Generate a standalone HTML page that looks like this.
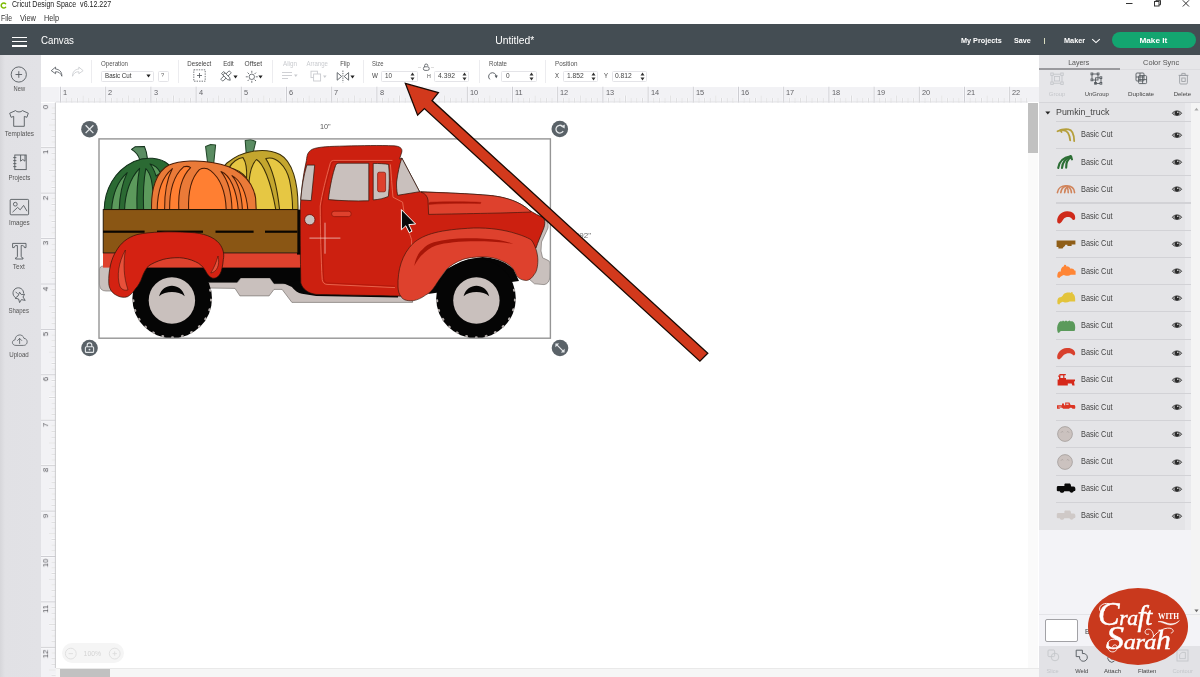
<!DOCTYPE html>
<html lang="en"><head><meta charset="utf-8"><title>Cricut Design Space</title>
<style>
html,body{margin:0;padding:0}
body{width:1200px;height:677px;position:relative;overflow:hidden;background:#fff;font-family:"Liberation Sans",sans-serif;color:#333}
.a{position:absolute}
.t{position:absolute;white-space:nowrap;line-height:1;font-size:7px;color:#444;will-change:transform}
.c{transform:translateX(-50%)}
svg{position:absolute;overflow:visible}
.inp{position:absolute;height:9px;border:1px solid #dcdce0;border-radius:2px;background:#fff;top:71px}
.div{position:absolute;width:1px;background:#e3e3e6;top:60px;height:23px}
.sp{position:absolute;top:72.5px;width:4px;height:8px}
.row{position:absolute;left:1056px;width:126px;height:1px;background:#cfcfd3}
.lt{position:absolute;left:1081px;font-size:7.5px;color:#444;line-height:1;white-space:nowrap}
</style></head><body>
<!-- chrome -->
<svg style="left:-0.2px;top:1.6px" width="7" height="7" viewBox="0 0 7 7"><path d="M5.6 1.7A2.55 2.55 0 1 0 5.6 5.3" fill="none" stroke="#7cba00" stroke-width="1.5" stroke-linecap="round"/></svg>
<div class="t" style="top:0.07px;font-size:8.3px;color:#222;left:11.70px;"><span style="display:inline-block;transform:scaleX(0.849);transform-origin:0 50%">Cricut Design Space&nbsp; v6.12.227</span></div>
<div class="t" style="top:13.82px;font-size:8.6px;color:#333;left:1.00px;"><span style="display:inline-block;transform:scaleX(0.794);transform-origin:0 50%">File</span></div>
<div class="t" style="top:13.82px;font-size:8.6px;color:#333;left:20.00px;"><span style="display:inline-block;transform:scaleX(0.866);transform-origin:0 50%">View</span></div>
<div class="t" style="top:13.82px;font-size:8.6px;color:#333;left:43.70px;"><span style="display:inline-block;transform:scaleX(0.848);transform-origin:0 50%">Help</span></div>
<svg style="left:1120px;top:0" width="80" height="10" viewBox="0 0 80 10"><g fill="none" stroke="#333" stroke-width="1"><path d="M6 3.5h6.5"/><rect x="34.5" y="1.5" width="4.5" height="4.5"/><path d="M36 1.5V0.3h4.5V4.8H39"/><path d="M62.8 0.3l6.2 6.2M69 .3l-6.2 6.2"/></g></svg>
<div class="a" style="left:0;top:24.2px;width:1200px;height:31px;background:#444d53"></div>
<div class="a" style="left:11.5px;top:36.6px;width:15px;height:1.5px;background:#fff"></div>
<div class="a" style="left:11.5px;top:40.8px;width:15px;height:1.5px;background:#fff"></div>
<div class="a" style="left:11.5px;top:45.0px;width:15px;height:1.5px;background:#fff"></div>
<div class="t" style="top:35.27px;font-size:11.5px;color:#fff;left:40.80px;"><span style="display:inline-block;transform:scaleX(0.846);transform-origin:0 50%">Canvas</span></div>
<div class="t" style="top:35.27px;font-size:11.5px;color:#fff;left:492.77px;"><span style="display:inline-block;transform:scaleX(0.897);transform-origin:50% 50%">Untitled*</span></div>
<div class="t" style="top:36.61px;font-size:7.9px;color:#fff;font-weight:bold;left:960.60px;"><span style="display:inline-block;transform:scaleX(0.918);transform-origin:0 50%">My Projects</span></div>
<div class="t" style="top:36.61px;font-size:7.9px;color:#fff;font-weight:bold;left:1013.70px;"><span style="display:inline-block;transform:scaleX(0.916);transform-origin:0 50%">Save</span></div>
<div class="a" style="left:1043.5px;top:37.5px;width:1px;height:6px;background:#d8dcc0"></div>
<div class="t" style="top:36.61px;font-size:7.9px;color:#fff;font-weight:bold;left:1063.50px;"><span style="display:inline-block;transform:scaleX(0.928);transform-origin:0 50%">Maker</span></div>
<svg style="left:1091px;top:38px" width="10" height="6" viewBox="0 0 10 6"><path d="M1.2 1.2L5 4.6L8.8 1.2" fill="none" stroke="#fff" stroke-width="1.1"/></svg>
<div class="a" style="left:1112px;top:32px;width:84px;height:16px;border-radius:8px;background:#13a570"></div>
<div class="t" style="top:36.61px;font-size:7.9px;color:#fff;font-weight:bold;left:1140.11px;"><span style="display:inline-block;transform:scaleX(1.045);transform-origin:50% 50%">Make It</span></div>
<div class="a" style="left:0;top:55.2px;width:41px;height:622px;background:linear-gradient(to right,#d6d6da 0,#e1e1e5 5px,#e2e2e6 100%)"></div>
<div class="a" style="left:41px;top:55.2px;width:997.5px;height:32px;background:#fff"></div>
<!-- sidebar -->
<svg style="left:9px;top:65px" width="20" height="20" viewBox="0 0 20 20"><circle cx="9.8" cy="9.5" r="7.6" fill="none" stroke="#565b60" stroke-width="0.9"/><path d="M9.8 6.2v6.6M6.5 9.5h6.6" stroke="#565b60" stroke-width="0.9" fill="none"/></svg>
<div class="t" style="top:86.47px;font-size:6.3px;color:#555;left:12.70px;"><span style="display:inline-block;transform:scaleX(0.912);transform-origin:50% 50%">New</span></div>
<svg style="left:8px;top:109px" width="22" height="19" viewBox="0 0 22 19"><path d="M7.6 1.6C8.6 3.4 13.4 3.4 14.4 1.6L20.3 4.2L18.9 8.3L16.3 7.4V17.3H5.7V7.4L3.1 8.3L1.7 4.2Z" fill="none" stroke="#565b60" stroke-width="0.9" stroke-linejoin="round"/></svg>
<div class="t" style="top:130.77px;font-size:6.3px;color:#555;left:4.64px;"><span style="display:inline-block;transform:scaleX(1.020);transform-origin:50% 50%">Templates</span></div>
<svg style="left:12px;top:153px" width="16" height="18" viewBox="0 0 16 18"><g fill="none" stroke="#565b60" stroke-width="0.9"><rect x="2.8" y="2" width="11.4" height="14.6"/><path d="M8.6 2v6.2l2.2-1.7l2.2 1.7V2"/><path d="M1.2 4.6h3.2M1.2 7.6h3.2M1.2 10.6h3.2M1.2 13.6h3.2"/></g></svg>
<div class="t" style="top:174.97px;font-size:6.3px;color:#555;left:7.62px;"><span style="display:inline-block;transform:scaleX(0.967);transform-origin:50% 50%">Projects</span></div>
<svg style="left:9px;top:198px" width="21" height="18" viewBox="0 0 21 18"><g fill="none" stroke="#565b60" stroke-width="0.9" stroke-linejoin="round"><rect x="1.2" y="1.4" width="18.4" height="15.4" rx="0.8"/><circle cx="6.3" cy="6.2" r="1.9"/><path d="M3.5 14.2L8.6 9.4L11.2 11.8L14.6 7.4L18 13.2"/></g></svg>
<div class="t" style="top:220.07px;font-size:6.3px;color:#555;left:8.67px;">Images</div>
<svg style="left:11px;top:242px" width="17" height="18" viewBox="0 0 17 18"><path d="M1.6 1.4H15V5.6H13.4C13.2 4 12.6 3.5 10.2 3.5V14.2C10.2 15.4 10.8 15.8 12 15.8V17H4.6V15.8C5.8 15.8 6.4 15.4 6.4 14.2V3.5C4 3.5 3.4 4 3.2 5.6H1.6Z" fill="none" stroke="#565b60" stroke-width="0.9" stroke-linejoin="round"/></svg>
<div class="t" style="top:263.87px;font-size:6.3px;color:#555;left:13.22px;"><span style="display:inline-block;transform:scaleX(1.039);transform-origin:50% 50%">Text</span></div>
<svg style="left:9.8px;top:287px" width="17" height="17" viewBox="0 0 17 17"><g fill="none" stroke="#565b60" stroke-width="0.9" stroke-linejoin="round"><path d="M5.2 10.4A5.3 5.3 0 1 1 13.6 6.4"/><path d="M9.6 5.2L11.3 7.6L14.6 7.2L13 10L15.2 13.4L11.4 12.6L9.6 15.6L8.6 12L5 11.2L8 9Z"/><path d="M5.6 4.8l2 2"/></g></svg>
<div class="t" style="top:307.67px;font-size:6.3px;color:#555;left:8.32px;"><span style="display:inline-block;transform:scaleX(0.959);transform-origin:50% 50%">Shapes</span></div>
<svg style="left:10.5px;top:333px" width="17.6" height="14" viewBox="0 0 20 16"><g fill="none" stroke="#565b60" stroke-width="0.9" stroke-linejoin="round" stroke-linecap="round"><path d="M5.2 14.2C0.6 14.2 0.2 8.4 4.6 7.8C4.6 1.2 13.6 0.2 14.8 6.2C19.6 6.2 19.8 14.2 14.6 14.2Z"/><path d="M9.8 12V6.4M7.4 8.6L9.8 6.2L12.2 8.6"/></g></svg>
<div class="t" style="top:351.67px;font-size:6.3px;color:#555;left:9.02px;"><span style="display:inline-block;transform:scaleX(0.977);transform-origin:50% 50%">Upload</span></div>
<!-- toolbar -->
<svg style="left:49.5px;top:65.8px" width="14.4" height="11.7" viewBox="0 0 16 13"><path d="M6.2 1.2L1.4 5.2L6.2 8.6V6.4C9.6 6.2 12 8 13.2 11.4C13.4 6.6 10.4 3.6 6.2 3.4Z" fill="none" stroke="#50565b" stroke-width="0.9" stroke-linejoin="round"/></svg>
<svg style="left:69.5px;top:65.8px" width="14.4" height="11.7" viewBox="0 0 16 13"><path d="M9.8 1.2L14.6 5.2L9.8 8.6V6.4C6.4 6.2 4 8 2.8 11.4C2.6 6.6 5.6 3.6 9.8 3.4Z" fill="none" stroke="#c9cbcf" stroke-width="0.9" stroke-linejoin="round"/></svg>
<div class="a" style="left:91px;top:60px;width:1px;height:23px;background:#ececef"></div>
<div class="t" style="top:61.47px;font-size:6.3px;color:#555;left:101.00px;"><span style="display:inline-block;transform:scaleX(0.976);transform-origin:0 50%">Operation</span></div>
<div class="a" style="left:101px;top:70.8px;width:51px;height:9.6px;border:0.8px solid #e4e4e8;border-radius:1.5px;background:#fff"></div>
<div class="t" style="top:73.37px;font-size:6.3px;color:#333;left:104.50px;"><span style="display:inline-block;transform:scaleX(0.983);transform-origin:0 50%">Basic Cut</span></div>
<svg style="left:145.5px;top:74px" width="5" height="4" viewBox="0 0 5 4"><path d="M0.4 0.5H4.6L2.5 3.5Z" fill="#222"/></svg>
<div class="a" style="left:157.5px;top:70.8px;width:9.4px;height:9.6px;border:0.8px solid #e4e4e8;border-radius:1.5px;background:#fff"></div>
<div class="t" style="top:73.29px;font-size:5.8px;color:#666;left:161.19px;">?</div>
<div class="a" style="left:177.5px;top:60px;width:1px;height:23px;background:#ececef"></div>
<div class="t" style="top:61.47px;font-size:6.3px;color:#444;left:186.74px;"><span style="display:inline-block;transform:scaleX(0.979);transform-origin:50% 50%">Deselect</span></div>
<svg style="left:192.5px;top:69.4px" width="13" height="13" viewBox="0 0 13 13"><rect x="0.8" y="0.8" width="11.4" height="11.4" fill="none" stroke="#50565b" stroke-width="0.8" stroke-dasharray="1.4 1.1"/><path d="M6.5 4v5M4 6.5h5" stroke="#50565b" stroke-width="0.8"/></svg>
<div class="t" style="top:61.47px;font-size:6.3px;color:#444;left:222.87px;"><span style="display:inline-block;transform:scaleX(0.967);transform-origin:50% 50%">Edit</span></div>
<svg style="left:219.5px;top:70px" width="12" height="12" viewBox="0 0 12 12"><g fill="#fff" stroke="#50565b" stroke-width="0.8" stroke-linejoin="round"><rect x="4.5" y="0" width="3" height="12" rx="0.6" transform="rotate(45 6 6)"/><path d="M4.5 1.2H7.5V9.6L6 12L4.5 9.6Z" transform="rotate(-45 6 6)"/><path d="M4.5 3H7.5" transform="rotate(-45 6 6)"/></g></svg>
<svg style="left:233px;top:74.5px" width="5" height="4" viewBox="0 0 5 4"><path d="M0.4 0.5H4.6L2.5 3.5Z" fill="#222"/></svg>
<div class="t" style="top:61.47px;font-size:6.3px;color:#444;left:245.35px;"><span style="display:inline-block;transform:scaleX(1.048);transform-origin:50% 50%">Offset</span></div>
<svg style="left:245px;top:69.5px" width="14" height="14" viewBox="0 0 14 14"><g fill="none" stroke="#50565b" stroke-width="0.8"><circle cx="6.8" cy="6.8" r="2.7"/><path d="M6.8 0.8v2M6.8 10.8v2M0.8 6.8h2M10.8 6.8h2M2.6 2.6l1.4 1.4M9.6 9.6l1.4 1.4M2.6 11l1.4-1.4M9.6 4l1.4-1.4"/></g></svg>
<svg style="left:257.5px;top:74.5px" width="5" height="4" viewBox="0 0 5 4"><path d="M0.4 0.5H4.6L2.5 3.5Z" fill="#222"/></svg>
<div class="a" style="left:271.5px;top:60px;width:1px;height:23px;background:#ececef"></div>
<div class="t" style="top:61.47px;font-size:6.3px;color:#c9cbcf;left:282.70px;">Align</div>
<svg style="left:281px;top:71px" width="18" height="11" viewBox="0 0 18 11"><g stroke="#c9cbcf" stroke-width="0.9" fill="none"><path d="M1 1.5h10M1 4.5h10M1 7.5h6"/></g><path d="M13 3.5H16.6L14.8 6Z" fill="#c9cbcf"/></svg>
<div class="t" style="top:61.47px;font-size:6.3px;color:#c9cbcf;left:305.79px;"><span style="display:inline-block;transform:scaleX(0.959);transform-origin:50% 50%">Arrange</span></div>
<svg style="left:310px;top:69.5px" width="18" height="13" viewBox="0 0 18 13"><g stroke="#c9cbcf" stroke-width="0.9" fill="#fff"><rect x="1" y="1.2" width="6.4" height="6.4"/><rect x="3.6" y="4" width="7" height="7"/></g><path d="M13 5.5H16.6L14.8 8Z" fill="#c9cbcf"/></svg>
<div class="t" style="top:61.47px;font-size:6.3px;color:#444;left:339.92px;"><span style="display:inline-block;transform:scaleX(0.936);transform-origin:50% 50%">Flip</span></div>
<svg style="left:336px;top:69.5px" width="14" height="13" viewBox="0 0 14 13"><g fill="none" stroke="#50565b" stroke-width="0.85" stroke-linejoin="round"><path d="M1.2 2.6L5.6 6.4L1.2 10.2Z"/><path d="M12.6 2.6L8.2 6.4L12.6 10.2Z"/><path d="M6.9 0.6V12.4" stroke-dasharray="1.3 1"/></g></svg>
<svg style="left:349.5px;top:74.5px" width="5" height="4" viewBox="0 0 5 4"><path d="M0.4 0.5H4.6L2.5 3.5Z" fill="#222"/></svg>
<div class="a" style="left:362.5px;top:60px;width:1px;height:23px;background:#ececef"></div>
<div class="t" style="top:61.47px;font-size:6.3px;color:#555;left:372.00px;"><span style="display:inline-block;transform:scaleX(0.938);transform-origin:0 50%">Size</span></div>
<div class="t" style="top:73.28px;font-size:6.4px;color:#444;left:372.30px;"><span style="display:inline-block;transform:scaleX(0.977);transform-origin:0 50%">W</span></div>
<div class="a" style="left:381.2px;top:70.8px;width:34.60000000000002px;height:9.4px;border:0.8px solid #e4e4e8;border-radius:1.5px;background:#fff"></div>
<div class="t" style="top:73.20px;font-size:6.5px;color:#444;left:385.00px;"><span style="display:inline-block;transform:scaleX(0.968);transform-origin:0 50%">10</span></div>
<svg style="left:410.1px;top:71.5px" width="5" height="9" viewBox="0 0 5 9"><path d="M2.5 0.6L4.5 3.4H0.5ZM2.5 8.4L4.5 5.6H0.5Z" fill="#333"/></svg>
<svg style="left:421.5px;top:62.5px" width="9" height="8" viewBox="0 0 9 8"><g fill="none" stroke="#50565b" stroke-width="0.8"><path d="M2.6 4V2.6A1.6 1.6 0 0 1 5.8 2.6V3.2"/><rect x="1.4" y="3.8" width="5.8" height="3.6" rx="1.6"/></g></svg>
<div class="a" style="left:418px;top:67px;width:3px;height:1px;background:#ddd"></div><div class="a" style="left:431px;top:67px;width:3px;height:1px;background:#ddd"></div>
<div class="t" style="top:73.87px;font-size:5px;color:#555;left:426.70px;"><span style="display:inline-block;transform:scaleX(1.052);transform-origin:0 50%">H</span></div>
<div class="a" style="left:434px;top:70.8px;width:33.30000000000001px;height:9.4px;border:0.8px solid #e4e4e8;border-radius:1.5px;background:#fff"></div>
<div class="t" style="top:73.20px;font-size:6.5px;color:#444;left:438.00px;"><span style="display:inline-block;transform:scaleX(1.045);transform-origin:0 50%">4.392</span></div>
<svg style="left:462.1px;top:71.5px" width="5" height="9" viewBox="0 0 5 9"><path d="M2.5 0.6L4.5 3.4H0.5ZM2.5 8.4L4.5 5.6H0.5Z" fill="#333"/></svg>
<div class="a" style="left:478.7px;top:60px;width:1px;height:23px;background:#ececef"></div>
<div class="t" style="top:61.47px;font-size:6.3px;color:#555;left:488.50px;"><span style="display:inline-block;transform:scaleX(0.970);transform-origin:0 50%">Rotate</span></div>
<svg style="left:487px;top:71px" width="11" height="11" viewBox="0 0 11 11"><path d="M2.9 8.4A3.8 3.8 0 1 1 9.2 5.2" fill="none" stroke="#50565b" stroke-width="0.9"/><path d="M7.6 4.6L10.8 4.6L9.3 7.2Z" fill="#50565b"/></svg>
<div class="a" style="left:500.6px;top:70.8px;width:34.0px;height:9.4px;border:0.8px solid #e4e4e8;border-radius:1.5px;background:#fff"></div>
<div class="t" style="top:73.20px;font-size:6.5px;color:#444;left:505.60px;">0</div>
<svg style="left:529.0px;top:71.5px" width="5" height="9" viewBox="0 0 5 9"><path d="M2.5 0.6L4.5 3.4H0.5ZM2.5 8.4L4.5 5.6H0.5Z" fill="#333"/></svg>
<div class="a" style="left:545px;top:60px;width:1px;height:23px;background:#ececef"></div>
<div class="t" style="top:61.47px;font-size:6.3px;color:#555;left:555.20px;">Position</div>
<div class="t" style="top:73.28px;font-size:6.4px;color:#444;left:555.20px;"><span style="display:inline-block;transform:scaleX(0.937);transform-origin:0 50%">X</span></div>
<div class="a" style="left:562.7px;top:70.8px;width:33.299999999999955px;height:9.4px;border:0.8px solid #e4e4e8;border-radius:1.5px;background:#fff"></div>
<div class="t" style="top:73.20px;font-size:6.5px;color:#444;left:566.70px;"><span style="display:inline-block;transform:scaleX(1.033);transform-origin:0 50%">1.852</span></div>
<svg style="left:590.8px;top:71.5px" width="5" height="9" viewBox="0 0 5 9"><path d="M2.5 0.6L4.5 3.4H0.5ZM2.5 8.4L4.5 5.6H0.5Z" fill="#333"/></svg>
<div class="t" style="top:73.28px;font-size:6.4px;color:#444;left:604.20px;"><span style="display:inline-block;transform:scaleX(0.937);transform-origin:0 50%">Y</span></div>
<div class="a" style="left:611.7px;top:70.8px;width:33.799999999999955px;height:9.4px;border:0.8px solid #e4e4e8;border-radius:1.5px;background:#fff"></div>
<div class="t" style="top:73.20px;font-size:6.5px;color:#444;left:615.20px;"><span style="display:inline-block;transform:scaleX(1.033);transform-origin:0 50%">0.812</span></div>
<svg style="left:640.2px;top:71.5px" width="5" height="9" viewBox="0 0 5 9"><path d="M2.5 0.6L4.5 3.4H0.5ZM2.5 8.4L4.5 5.6H0.5Z" fill="#333"/></svg>
<!-- rulers -->
<div class="a" style="left:41px;top:86.8px;width:997.5px;height:15.7px;background:#f2f2f5"></div>
<div class="a" style="left:41px;top:102.5px;width:14.7px;height:575px;background:#f2f2f5"></div>
<svg style="left:0;top:0" width="1200" height="677" viewBox="0 0 1200 677"><g fill="none"><path d="M66.2 98V102.5M71.8 98V102.5M77.5 98V102.5M88.8 98V102.5M94.4 98V102.5M100.0 98V102.5M111.4 98V102.5M117.0 98V102.5M122.7 98V102.5M134.0 98V102.5M139.6 98V102.5M145.3 98V102.5M156.6 98V102.5M162.2 98V102.5M167.9 98V102.5M179.2 98V102.5M184.8 98V102.5M190.5 98V102.5M201.8 98V102.5M207.4 98V102.5M213.1 98V102.5M224.4 98V102.5M230.0 98V102.5M235.7 98V102.5M247.0 98V102.5M252.6 98V102.5M258.2 98V102.5M269.6 98V102.5M275.2 98V102.5M280.9 98V102.5M292.2 98V102.5M297.8 98V102.5M303.5 98V102.5M314.8 98V102.5M320.4 98V102.5M326.1 98V102.5M337.4 98V102.5M343.0 98V102.5M348.7 98V102.5M360.0 98V102.5M365.6 98V102.5M371.3 98V102.5M382.6 98V102.5M388.2 98V102.5M393.9 98V102.5M405.2 98V102.5M410.8 98V102.5M416.5 98V102.5M427.8 98V102.5M433.4 98V102.5M439.1 98V102.5M450.4 98V102.5M456.0 98V102.5M461.7 98V102.5M473.0 98V102.5M478.6 98V102.5M484.3 98V102.5M495.6 98V102.5M501.2 98V102.5M506.9 98V102.5M518.1 98V102.5M523.8 98V102.5M529.4 98V102.5M540.8 98V102.5M546.4 98V102.5M552.0 98V102.5M563.4 98V102.5M569.0 98V102.5M574.6 98V102.5M586.0 98V102.5M591.6 98V102.5M597.2 98V102.5M608.5 98V102.5M614.2 98V102.5M619.9 98V102.5M631.1 98V102.5M636.8 98V102.5M642.5 98V102.5M653.8 98V102.5M659.4 98V102.5M665.0 98V102.5M676.4 98V102.5M682.0 98V102.5M687.6 98V102.5M699.0 98V102.5M704.6 98V102.5M710.2 98V102.5M721.5 98V102.5M727.2 98V102.5M732.9 98V102.5M744.1 98V102.5M749.8 98V102.5M755.5 98V102.5M766.8 98V102.5M772.4 98V102.5M778.0 98V102.5M789.4 98V102.5M795.0 98V102.5M800.6 98V102.5M812.0 98V102.5M817.6 98V102.5M823.2 98V102.5M834.5 98V102.5M840.2 98V102.5M845.9 98V102.5M857.1 98V102.5M862.8 98V102.5M868.5 98V102.5M879.8 98V102.5M885.4 98V102.5M891.0 98V102.5M902.4 98V102.5M908.0 98V102.5M913.6 98V102.5M925.0 98V102.5M930.6 98V102.5M936.2 98V102.5M947.6 98V102.5M953.2 98V102.5M958.9 98V102.5M970.1 98V102.5M975.8 98V102.5M981.5 98V102.5M992.8 98V102.5M998.4 98V102.5M1004.1 98V102.5M1015.4 98V102.5M1021.0 98V102.5M1026.7 98V102.5M51.5 108.0H55.7M51.5 113.7H55.7M51.5 119.3H55.7M51.5 130.7H55.7M51.5 136.4H55.7M51.5 142.0H55.7M51.5 153.4H55.7M51.5 159.1H55.7M51.5 164.8H55.7M51.5 176.1H55.7M51.5 181.8H55.7M51.5 187.5H55.7M51.5 198.8H55.7M51.5 204.5H55.7M51.5 210.2H55.7M51.5 221.5H55.7M51.5 227.2H55.7M51.5 232.9H55.7M51.5 244.2H55.7M51.5 249.9H55.7M51.5 255.6H55.7M51.5 266.9H55.7M51.5 272.6H55.7M51.5 278.3H55.7M51.5 289.7H55.7M51.5 295.3H55.7M51.5 301.0H55.7M51.5 312.4H55.7M51.5 318.0H55.7M51.5 323.7H55.7M51.5 335.1H55.7M51.5 340.8H55.7M51.5 346.4H55.7M51.5 357.8H55.7M51.5 363.5H55.7M51.5 369.1H55.7M51.5 380.5H55.7M51.5 386.2H55.7M51.5 391.9H55.7M51.5 403.2H55.7M51.5 408.9H55.7M51.5 414.6H55.7M51.5 425.9H55.7M51.5 431.6H55.7M51.5 437.3H55.7M51.5 448.6H55.7M51.5 454.3H55.7M51.5 460.0H55.7M51.5 471.3H55.7M51.5 477.0H55.7M51.5 482.7H55.7M51.5 494.0H55.7M51.5 499.7H55.7M51.5 505.4H55.7M51.5 516.8H55.7M51.5 522.4H55.7M51.5 528.1H55.7M51.5 539.5H55.7M51.5 545.1H55.7M51.5 550.8H55.7M51.5 562.2H55.7M51.5 567.9H55.7M51.5 573.5H55.7M51.5 584.9H55.7M51.5 590.6H55.7M51.5 596.2H55.7M51.5 607.6H55.7M51.5 613.3H55.7M51.5 619.0H55.7M51.5 630.3H55.7M51.5 636.0H55.7M51.5 641.7H55.7M51.5 653.0H55.7M51.5 658.7H55.7M51.5 664.4H55.7M51.5 675.7H55.7M83.1 95.5V102.5M128.3 95.5V102.5M173.5 95.5V102.5M218.7 95.5V102.5M263.9 95.5V102.5M309.1 95.5V102.5M354.3 95.5V102.5M399.5 95.5V102.5M444.7 95.5V102.5M489.9 95.5V102.5M535.1 95.5V102.5M580.3 95.5V102.5M625.5 95.5V102.5M670.7 95.5V102.5M715.9 95.5V102.5M761.1 95.5V102.5M806.3 95.5V102.5M851.5 95.5V102.5M896.7 95.5V102.5M941.9 95.5V102.5M987.1 95.5V102.5M49 125.0H55.7M49 170.4H55.7M49 215.9H55.7M49 261.3H55.7M49 306.7H55.7M49 352.1H55.7M49 397.5H55.7M49 443.0H55.7M49 488.4H55.7M49 533.8H55.7M49 579.2H55.7M49 624.6H55.7M49 670.0H55.7" stroke="#fff" stroke-width="1.8"/><path d="M66.2 98V102.5M71.8 98V102.5M77.5 98V102.5M88.8 98V102.5M94.4 98V102.5M100.0 98V102.5M111.4 98V102.5M117.0 98V102.5M122.7 98V102.5M134.0 98V102.5M139.6 98V102.5M145.3 98V102.5M156.6 98V102.5M162.2 98V102.5M167.9 98V102.5M179.2 98V102.5M184.8 98V102.5M190.5 98V102.5M201.8 98V102.5M207.4 98V102.5M213.1 98V102.5M224.4 98V102.5M230.0 98V102.5M235.7 98V102.5M247.0 98V102.5M252.6 98V102.5M258.2 98V102.5M269.6 98V102.5M275.2 98V102.5M280.9 98V102.5M292.2 98V102.5M297.8 98V102.5M303.5 98V102.5M314.8 98V102.5M320.4 98V102.5M326.1 98V102.5M337.4 98V102.5M343.0 98V102.5M348.7 98V102.5M360.0 98V102.5M365.6 98V102.5M371.3 98V102.5M382.6 98V102.5M388.2 98V102.5M393.9 98V102.5M405.2 98V102.5M410.8 98V102.5M416.5 98V102.5M427.8 98V102.5M433.4 98V102.5M439.1 98V102.5M450.4 98V102.5M456.0 98V102.5M461.7 98V102.5M473.0 98V102.5M478.6 98V102.5M484.3 98V102.5M495.6 98V102.5M501.2 98V102.5M506.9 98V102.5M518.1 98V102.5M523.8 98V102.5M529.4 98V102.5M540.8 98V102.5M546.4 98V102.5M552.0 98V102.5M563.4 98V102.5M569.0 98V102.5M574.6 98V102.5M586.0 98V102.5M591.6 98V102.5M597.2 98V102.5M608.5 98V102.5M614.2 98V102.5M619.9 98V102.5M631.1 98V102.5M636.8 98V102.5M642.5 98V102.5M653.8 98V102.5M659.4 98V102.5M665.0 98V102.5M676.4 98V102.5M682.0 98V102.5M687.6 98V102.5M699.0 98V102.5M704.6 98V102.5M710.2 98V102.5M721.5 98V102.5M727.2 98V102.5M732.9 98V102.5M744.1 98V102.5M749.8 98V102.5M755.5 98V102.5M766.8 98V102.5M772.4 98V102.5M778.0 98V102.5M789.4 98V102.5M795.0 98V102.5M800.6 98V102.5M812.0 98V102.5M817.6 98V102.5M823.2 98V102.5M834.5 98V102.5M840.2 98V102.5M845.9 98V102.5M857.1 98V102.5M862.8 98V102.5M868.5 98V102.5M879.8 98V102.5M885.4 98V102.5M891.0 98V102.5M902.4 98V102.5M908.0 98V102.5M913.6 98V102.5M925.0 98V102.5M930.6 98V102.5M936.2 98V102.5M947.6 98V102.5M953.2 98V102.5M958.9 98V102.5M970.1 98V102.5M975.8 98V102.5M981.5 98V102.5M992.8 98V102.5M998.4 98V102.5M1004.1 98V102.5M1015.4 98V102.5M1021.0 98V102.5M1026.7 98V102.5M51.5 108.0H55.7M51.5 113.7H55.7M51.5 119.3H55.7M51.5 130.7H55.7M51.5 136.4H55.7M51.5 142.0H55.7M51.5 153.4H55.7M51.5 159.1H55.7M51.5 164.8H55.7M51.5 176.1H55.7M51.5 181.8H55.7M51.5 187.5H55.7M51.5 198.8H55.7M51.5 204.5H55.7M51.5 210.2H55.7M51.5 221.5H55.7M51.5 227.2H55.7M51.5 232.9H55.7M51.5 244.2H55.7M51.5 249.9H55.7M51.5 255.6H55.7M51.5 266.9H55.7M51.5 272.6H55.7M51.5 278.3H55.7M51.5 289.7H55.7M51.5 295.3H55.7M51.5 301.0H55.7M51.5 312.4H55.7M51.5 318.0H55.7M51.5 323.7H55.7M51.5 335.1H55.7M51.5 340.8H55.7M51.5 346.4H55.7M51.5 357.8H55.7M51.5 363.5H55.7M51.5 369.1H55.7M51.5 380.5H55.7M51.5 386.2H55.7M51.5 391.9H55.7M51.5 403.2H55.7M51.5 408.9H55.7M51.5 414.6H55.7M51.5 425.9H55.7M51.5 431.6H55.7M51.5 437.3H55.7M51.5 448.6H55.7M51.5 454.3H55.7M51.5 460.0H55.7M51.5 471.3H55.7M51.5 477.0H55.7M51.5 482.7H55.7M51.5 494.0H55.7M51.5 499.7H55.7M51.5 505.4H55.7M51.5 516.8H55.7M51.5 522.4H55.7M51.5 528.1H55.7M51.5 539.5H55.7M51.5 545.1H55.7M51.5 550.8H55.7M51.5 562.2H55.7M51.5 567.9H55.7M51.5 573.5H55.7M51.5 584.9H55.7M51.5 590.6H55.7M51.5 596.2H55.7M51.5 607.6H55.7M51.5 613.3H55.7M51.5 619.0H55.7M51.5 630.3H55.7M51.5 636.0H55.7M51.5 641.7H55.7M51.5 653.0H55.7M51.5 658.7H55.7M51.5 664.4H55.7M51.5 675.7H55.7M83.1 95.5V102.5M128.3 95.5V102.5M173.5 95.5V102.5M218.7 95.5V102.5M263.9 95.5V102.5M309.1 95.5V102.5M354.3 95.5V102.5M399.5 95.5V102.5M444.7 95.5V102.5M489.9 95.5V102.5M535.1 95.5V102.5M580.3 95.5V102.5M625.5 95.5V102.5M670.7 95.5V102.5M715.9 95.5V102.5M761.1 95.5V102.5M806.3 95.5V102.5M851.5 95.5V102.5M896.7 95.5V102.5M941.9 95.5V102.5M987.1 95.5V102.5M49 125.0H55.7M49 170.4H55.7M49 215.9H55.7M49 261.3H55.7M49 306.7H55.7M49 352.1H55.7M49 397.5H55.7M49 443.0H55.7M49 488.4H55.7M49 533.8H55.7M49 579.2H55.7M49 624.6H55.7M49 670.0H55.7" stroke="#c4c4c8" stroke-width="0.6"/><path d="M60.5 86.8V102.5M105.7 86.8V102.5M150.9 86.8V102.5M196.1 86.8V102.5M241.3 86.8V102.5M286.5 86.8V102.5M331.7 86.8V102.5M376.9 86.8V102.5M422.1 86.8V102.5M467.3 86.8V102.5M512.5 86.8V102.5M557.7 86.8V102.5M602.9 86.8V102.5M648.1 86.8V102.5M693.3 86.8V102.5M738.5 86.8V102.5M783.7 86.8V102.5M828.9 86.8V102.5M874.1 86.8V102.5M919.3 86.8V102.5M964.5 86.8V102.5M1009.7 86.8V102.5M41 147.7H55.7M41 193.1H55.7M41 238.6H55.7M41 284.0H55.7M41 329.4H55.7M41 374.8H55.7M41 420.2H55.7M41 465.7H55.7M41 511.1H55.7M41 556.5H55.7M41 601.9H55.7M41 647.3H55.7" stroke="#fbfbfd" stroke-width="2.2"/><path d="M60.5 86.8V102.5M105.7 86.8V102.5M150.9 86.8V102.5M196.1 86.8V102.5M241.3 86.8V102.5M286.5 86.8V102.5M331.7 86.8V102.5M376.9 86.8V102.5M422.1 86.8V102.5M467.3 86.8V102.5M512.5 86.8V102.5M557.7 86.8V102.5M602.9 86.8V102.5M648.1 86.8V102.5M693.3 86.8V102.5M738.5 86.8V102.5M783.7 86.8V102.5M828.9 86.8V102.5M874.1 86.8V102.5M919.3 86.8V102.5M964.5 86.8V102.5M1009.7 86.8V102.5M41 147.7H55.7M41 193.1H55.7M41 238.6H55.7M41 284.0H55.7M41 329.4H55.7M41 374.8H55.7M41 420.2H55.7M41 465.7H55.7M41 511.1H55.7M41 556.5H55.7M41 601.9H55.7M41 647.3H55.7" stroke="#c2c2c6" stroke-width="0.8"/><path d="M55.7 102H1027.8" stroke="#dadade" stroke-width="0.8"/><path d="M55.4 102.5V668" stroke="#c6c6ca" stroke-width="0.9"/></g></svg>
<div class="t" style="top:89.34px;font-size:7.4px;color:#636367;left:63.20px;">1</div>
<div class="t" style="top:89.34px;font-size:7.4px;color:#636367;left:108.40px;">2</div>
<div class="t" style="top:89.34px;font-size:7.4px;color:#636367;left:153.60px;">3</div>
<div class="t" style="top:89.34px;font-size:7.4px;color:#636367;left:198.80px;">4</div>
<div class="t" style="top:89.34px;font-size:7.4px;color:#636367;left:244.00px;">5</div>
<div class="t" style="top:89.34px;font-size:7.4px;color:#636367;left:289.20px;">6</div>
<div class="t" style="top:89.34px;font-size:7.4px;color:#636367;left:334.40px;">7</div>
<div class="t" style="top:89.34px;font-size:7.4px;color:#636367;left:379.60px;">8</div>
<div class="t" style="top:89.34px;font-size:7.4px;color:#636367;left:424.80px;">9</div>
<div class="t" style="top:89.34px;font-size:7.4px;color:#636367;left:470.00px;">10</div>
<div class="t" style="top:89.34px;font-size:7.4px;color:#636367;left:515.20px;">11</div>
<div class="t" style="top:89.34px;font-size:7.4px;color:#636367;left:560.40px;">12</div>
<div class="t" style="top:89.34px;font-size:7.4px;color:#636367;left:605.60px;">13</div>
<div class="t" style="top:89.34px;font-size:7.4px;color:#636367;left:650.80px;">14</div>
<div class="t" style="top:89.34px;font-size:7.4px;color:#636367;left:696.00px;">15</div>
<div class="t" style="top:89.34px;font-size:7.4px;color:#636367;left:741.20px;">16</div>
<div class="t" style="top:89.34px;font-size:7.4px;color:#636367;left:786.40px;">17</div>
<div class="t" style="top:89.34px;font-size:7.4px;color:#636367;left:831.60px;">18</div>
<div class="t" style="top:89.34px;font-size:7.4px;color:#636367;left:876.80px;">19</div>
<div class="t" style="top:89.34px;font-size:7.4px;color:#636367;left:922.00px;">20</div>
<div class="t" style="top:89.34px;font-size:7.4px;color:#636367;left:967.20px;">21</div>
<div class="t" style="top:89.34px;font-size:7.4px;color:#636367;left:1012.40px;">22</div>
<div class="t" style="left:45.9px;top:106.8px;font-size:7.8px;color:#55555a;transform:translate(-50%,-50%) rotate(-90deg)">0</div>
<div class="t" style="left:45.9px;top:152.2px;font-size:7.8px;color:#55555a;transform:translate(-50%,-50%) rotate(-90deg)">1</div>
<div class="t" style="left:45.9px;top:197.6px;font-size:7.8px;color:#55555a;transform:translate(-50%,-50%) rotate(-90deg)">2</div>
<div class="t" style="left:45.9px;top:243.1px;font-size:7.8px;color:#55555a;transform:translate(-50%,-50%) rotate(-90deg)">3</div>
<div class="t" style="left:45.9px;top:288.5px;font-size:7.8px;color:#55555a;transform:translate(-50%,-50%) rotate(-90deg)">4</div>
<div class="t" style="left:45.9px;top:333.9px;font-size:7.8px;color:#55555a;transform:translate(-50%,-50%) rotate(-90deg)">5</div>
<div class="t" style="left:45.9px;top:379.3px;font-size:7.8px;color:#55555a;transform:translate(-50%,-50%) rotate(-90deg)">6</div>
<div class="t" style="left:45.9px;top:424.7px;font-size:7.8px;color:#55555a;transform:translate(-50%,-50%) rotate(-90deg)">7</div>
<div class="t" style="left:45.9px;top:470.2px;font-size:7.8px;color:#55555a;transform:translate(-50%,-50%) rotate(-90deg)">8</div>
<div class="t" style="left:45.9px;top:515.6px;font-size:7.8px;color:#55555a;transform:translate(-50%,-50%) rotate(-90deg)">9</div>
<div class="t" style="left:45.9px;top:563.1px;font-size:7.8px;color:#55555a;transform:translate(-50%,-50%) rotate(-90deg)">10</div>
<div class="t" style="left:45.9px;top:608.5px;font-size:7.8px;color:#55555a;transform:translate(-50%,-50%) rotate(-90deg)">11</div>
<div class="t" style="left:45.9px;top:653.9px;font-size:7.8px;color:#55555a;transform:translate(-50%,-50%) rotate(-90deg)">12</div>
<div class="a" style="left:41px;top:86.8px;width:14.7px;height:15.7px;background:#f2f2f5"></div>
<!-- canvas -->
<div class="a" style="left:1027.8px;top:102.5px;width:10.7px;height:566px;background:#fafafa"></div>
<div class="a" style="left:1027.8px;top:102.5px;width:10.4px;height:50.5px;background:#c1c1c1"></div>
<div class="a" style="left:55.7px;top:667.8px;width:983px;height:9.5px;background:#f6f6f6;border-top:1px solid #e9e9e9"></div>
<div class="a" style="left:60px;top:668.6px;width:50px;height:8.4px;background:#c1c1c1"></div>
<div class="a" style="left:61.5px;top:642.5px;width:62px;height:20px;border-radius:10px;background:#f5f5f5"></div>
<svg style="left:61.5px;top:642.5px" width="62" height="20" viewBox="0 0 62 20"><g fill="none" stroke="#dedede" stroke-width="0.9"><circle cx="8.8" cy="10.6" r="5.4"/><circle cx="52.7" cy="10.6" r="5.4"/><path d="M6.6 10.6h4.4M50.5 10.6h4.4M52.7 8.4v4.4"/></g></svg>
<div class="t" style="top:650.02px;font-size:7.3px;color:#d4d4d4;left:83.26px;"><span style="display:inline-block;transform:scaleX(0.937);transform-origin:50% 50%">100%</span></div>
<!-- truck -->
<svg style="left:0;top:0" width="1200" height="677" viewBox="0 0 1200 677">
<g fill="#c9c0bd" stroke="#6a6462" stroke-width="0.6"><path d="M116 266H103.5Q99.4 266 99.4 270V284Q99.6 291 106 291H120Z"/><path d="M206 282L238 282L240.7 278L269.9 278L274 283.7L300 283.7L300 290L412 297L412.6 302.4L291.9 302.4L282.1 289.4L274 289.4L269.1 295.9L239.9 295.9L235 288.4L206 288Z"/><path d="M541 216Q549.5 221 548 228L541.5 242L541 251L542.6 257.8L548.5 260.6Q550.8 262 550.3 266L550 277Q549 284 544 284.6L534.5 283.8L529 279L527 238Z"/></g>
<g fill="#050505"><path d="M114 266H301V283.8H274L269.9 278H240.7L237 282.6H114Z"/><path d="M283 283L291.9 287Q296 292.5 302 293.8L316.2 295.9L398 297.4L398 280L300 280Z"/><path d="M428 294L446.8 269.1Q463 259 482.5 256.9Q502 258 513.4 269.1L519 281Z"/><circle cx="172.2" cy="298.4" r="39.8"/><circle cx="476" cy="298.4" r="39.8"/></g>
<ellipse cx="210.2" cy="290.3" rx="1.1" ry="1.5" fill="#b5aeac" transform="rotate(-12.0 210.2 290.3)"/><ellipse cx="211.1" cy="300.1" rx="1.1" ry="1.5" fill="#b5aeac" transform="rotate(2.5 211.1 300.1)"/><ellipse cx="209.4" cy="309.8" rx="1.1" ry="1.5" fill="#b5aeac" transform="rotate(17.0 209.4 309.8)"/><ellipse cx="205.4" cy="318.7" rx="1.1" ry="1.5" fill="#b5aeac" transform="rotate(31.5 205.4 318.7)"/><ellipse cx="199.2" cy="326.4" rx="1.1" ry="1.5" fill="#b5aeac" transform="rotate(46.0 199.2 326.4)"/><ellipse cx="191.4" cy="332.3" rx="1.1" ry="1.5" fill="#b5aeac" transform="rotate(60.5 191.4 332.3)"/><ellipse cx="182.3" cy="336.0" rx="1.1" ry="1.5" fill="#b5aeac" transform="rotate(75.0 182.3 336.0)"/><ellipse cx="172.5" cy="337.3" rx="1.1" ry="1.5" fill="#b5aeac" transform="rotate(89.5 172.5 337.3)"/><ellipse cx="162.8" cy="336.1" rx="1.1" ry="1.5" fill="#b5aeac" transform="rotate(104.0 162.8 336.1)"/><ellipse cx="153.6" cy="332.6" rx="1.1" ry="1.5" fill="#b5aeac" transform="rotate(118.5 153.6 332.6)"/><ellipse cx="145.7" cy="326.8" rx="1.1" ry="1.5" fill="#b5aeac" transform="rotate(133.0 145.7 326.8)"/><ellipse cx="139.4" cy="319.3" rx="1.1" ry="1.5" fill="#b5aeac" transform="rotate(147.5 139.4 319.3)"/><ellipse cx="135.2" cy="310.4" rx="1.1" ry="1.5" fill="#b5aeac" transform="rotate(162.0 135.2 310.4)"/><ellipse cx="133.4" cy="300.8" rx="1.1" ry="1.5" fill="#b5aeac" transform="rotate(176.5 133.4 300.8)"/><ellipse cx="514.0" cy="290.3" rx="1.1" ry="1.5" fill="#b5aeac" transform="rotate(-12.0 514.0 290.3)"/><ellipse cx="514.9" cy="300.1" rx="1.1" ry="1.5" fill="#b5aeac" transform="rotate(2.5 514.9 300.1)"/><ellipse cx="513.2" cy="309.8" rx="1.1" ry="1.5" fill="#b5aeac" transform="rotate(17.0 513.2 309.8)"/><ellipse cx="509.2" cy="318.7" rx="1.1" ry="1.5" fill="#b5aeac" transform="rotate(31.5 509.2 318.7)"/><ellipse cx="503.0" cy="326.4" rx="1.1" ry="1.5" fill="#b5aeac" transform="rotate(46.0 503.0 326.4)"/><ellipse cx="495.2" cy="332.3" rx="1.1" ry="1.5" fill="#b5aeac" transform="rotate(60.5 495.2 332.3)"/><ellipse cx="486.1" cy="336.0" rx="1.1" ry="1.5" fill="#b5aeac" transform="rotate(75.0 486.1 336.0)"/><ellipse cx="476.3" cy="337.3" rx="1.1" ry="1.5" fill="#b5aeac" transform="rotate(89.5 476.3 337.3)"/><ellipse cx="466.6" cy="336.1" rx="1.1" ry="1.5" fill="#b5aeac" transform="rotate(104.0 466.6 336.1)"/><ellipse cx="457.4" cy="332.6" rx="1.1" ry="1.5" fill="#b5aeac" transform="rotate(118.5 457.4 332.6)"/><ellipse cx="449.5" cy="326.8" rx="1.1" ry="1.5" fill="#b5aeac" transform="rotate(133.0 449.5 326.8)"/><ellipse cx="443.2" cy="319.3" rx="1.1" ry="1.5" fill="#b5aeac" transform="rotate(147.5 443.2 319.3)"/><ellipse cx="439.0" cy="310.4" rx="1.1" ry="1.5" fill="#b5aeac" transform="rotate(162.0 439.0 310.4)"/><ellipse cx="437.2" cy="300.8" rx="1.1" ry="1.5" fill="#b5aeac" transform="rotate(176.5 437.2 300.8)"/>
<circle cx="171.9" cy="300.5" r="23.2" fill="#c9c0bd"/><path d="M159.1 296.2C162.9 282.4 180.9 282.4 184.70000000000002 296.2C178.4 290.6 165.4 290.6 159.1 296.2Z" fill="#050505"/><circle cx="476.4" cy="300.5" r="23.2" fill="#c9c0bd"/><path d="M463.59999999999997 296.2C467.4 282.4 485.4 282.4 489.2 296.2C482.9 290.6 469.9 290.6 463.59999999999997 296.2Z" fill="#050505"/>
<g stroke="#3a2e08" stroke-width="1.05" stroke-linejoin="round"><path d="M246.2 153.5L245.2 140.6L250.5 139.6L255.8 141.4L252.9 153.5Z" fill="#5a8c62" stroke="#24482a"/><path d="M217 209.6C215 190 216 173 227 163C235 156.5 245 152.5 252 151.5C262 149.5 272 150.5 280 154.5C292 161 298.5 182 298 209.6Z" fill="#c4a62e"/><path d="M229 168C232 162 238 158 243 157.6C246 162 247 170 246.6 178C242 172 236 169 229 168Z" fill="#e6c743"/><path d="M250.2 209.6C247.5 190 248 168 256.5 159.5C263 163 270.5 180 275.8 209.6Z" fill="#e6c743"/><path d="M279.6 209.6C277 186 272 168 265.8 158.6C276 155.5 286 166 289.5 180C291.5 190 292.6 200 292.6 209.6Z" fill="#e6c743"/></g>
<g stroke="#12301a" stroke-width="1.05" stroke-linejoin="round"><path d="M139.6 159.4C138 154 135 151.5 131.5 149.4L135 146.8L144.4 146.4C146 150 147 154 147.4 158.4Z" fill="#5a8c62"/><path d="M104.2 209.6C104.6 190 114 171 134 161.5C146 156.5 160 157 168.5 164.5L170 209.6Z" fill="#2b6a33"/><path d="M111.6 209.6C112.5 195 118 181 127.2 172.6C121.8 184 119.6 197 119.2 209.6Z" fill="#5c9a5c"/><path d="M124.6 209.6C125 194 130 178 139.6 168.4C137 182 136.6 196 137 209.6Z" fill="#5c9a5c"/><path d="M143.6 209.6C143 194 143.6 180 145.8 168.6C150.5 173 153.4 181 153.6 209.6Z" fill="#5c9a5c"/><path d="M150 164C154 165 158.5 168.6 160.5 173L156 176C154.6 171 152.6 167 150 164Z" fill="#5c9a5c"/></g>
<g stroke="#4a1c06" stroke-width="1.05" stroke-linejoin="round"><path d="M207.6 162.8L205.6 146.6L210.6 144.4L215.6 145L213.8 162.8Z" fill="#5a8c62" stroke="#24482a"/><path d="M151.6 209.6C150.8 190 156 171.5 169 165C180 160.4 200 160 212 162.6C236 166 252.5 178 255.6 198L256.2 209.6Z" fill="#ea7a38"/><path d="M157.2 209.6C157.4 192 162 177 172.4 168.6C166.4 180 164.4 195 164.6 209.6Z" fill="#ff7f32"/><path d="M169.6 209.6C169.4 192 173 176 183.6 166.8C186.6 166 189 166.4 190.6 167.6C181 177 178 193 178.8 209.6Z" fill="#ff7f32"/><path d="M188.6 209.6C188 192 191 178 199.4 169.6C203 167.6 207 168 210.6 170.6C220 178 225.6 192 226.2 209.6Z" fill="#ff7f32"/><path d="M232 209.6C231.6 194 228 180 221 171.6C230 175 236.6 190 238.2 209.6Z" fill="#ff7f32"/><path d="M242.4 209.6C241.6 195 238.4 183 232 175.6C241 180 246.6 194 247.8 209.6Z" fill="#ff7f32"/></g>
<rect x="103" y="253" width="198" height="14.6" fill="#de412d"/><rect x="297" y="209.6" width="4" height="45" fill="#050505"/><rect x="103.2" y="209.6" width="194.6" height="43.3" fill="#8a5614" stroke="#1c1004" stroke-width="0.9"/><rect x="103" y="230.6" width="41.599999999999994" height="2.2" fill="#0a0602"/><rect x="157" y="230.6" width="46" height="2.2" fill="#0a0602"/><rect x="215.5" y="230.6" width="38.099999999999994" height="2.2" fill="#0a0602"/><rect x="265" y="230.6" width="32.5" height="2.2" fill="#0a0602"/>
<g stroke="#2a1208" stroke-width="0.7" stroke-linejoin="round"><path d="M300.8 283C300.4 260 300 230 300.2 209.6C300.6 195 303 175 306.4 160.6C307 155 307.6 152 312 149.4C318 146.6 330 146.4 345 146C362 145.6 380 145.2 394 145.8C399.5 146.2 402.6 148 401.8 152L399.6 159L401.8 158L419.6 191.7C440 192.6 470 193.6 491.4 195.6C507 197.4 520 202 528.5 209.6C534 213.6 540 216 542.8 217.4C546 220 545 226 542.6 231C540.6 236 538 242 536 248L525 246L500 244L470 244L440 254L425 278L408 296L398 296C380 295.6 340 295 316.2 294.4C308 293.4 302.6 289 300.8 283Z" fill="#cc2010"/><path d="M306.8 165.1L314.7 165.1L311.2 200.6L300.8 199.9C301.6 188 303.6 176 306.8 165.1Z" fill="#c9c0bd"/><path d="M339 163.2H368.8V200.8C355 201.2 341 200.8 328.4 199.6C330 186 332.6 174 335.6 165.4C336.2 163.8 337.4 163.2 339 163.2Z" fill="#c9c0bd"/><path d="M373.2 163.4C379 163.4 385 163.8 388.6 164.4C389.6 174 389.6 186 388.4 196.4C384 198.4 378.6 199.6 373.2 199.9Z" fill="#c9c0bd"/><path d="M401.8 158L419.6 191.7L397.6 195.3C396.6 190 396.4 186 396.6 182C397.6 174 399.4 165 401.8 158Z" fill="#c9c0bd"/><rect x="377.6" y="172.2" width="8" height="19.6" rx="1.6" fill="#de412d" stroke="#8a1408"/><circle cx="309.8" cy="219.7" r="5.2" fill="#c9c0bd" stroke="#7a1208" stroke-width="0.9"/></g>
<g fill="none" stroke="#ea6a52" stroke-width="0.9" stroke-linejoin="round"><path d="M392.4 160.4H333.6C331.4 160.6 330.6 161.6 330.2 163.4C326 178 322 194 320.2 206C320.4 230 321 260 322.2 279.6C322.8 283 324.4 284.2 327 284.4L395 287.6"/><path d="M390.4 164.4C391.4 176 392 188 393 197.2L402.6 202.2C404 214 407 228 411.6 239.6V262"/></g><g fill="none" stroke="#a81608" stroke-width="0.7"><path d="M391.6 161.6H334.6C332.8 161.8 332 162.6 331.6 164C327.4 178.6 323.4 194 321.6 206C321.8 230 322.4 259 323.6 278.6C324 281.6 325.4 282.8 327.6 283L395 286.2"/></g><rect x="331.6" y="211.2" width="19.6" height="5.4" rx="2.6" fill="#de412d" stroke="#8a1408" stroke-width="0.7"/>
<g stroke="#2a1208" stroke-width="0.6" stroke-linejoin="round"><path d="M421 192C440 192.6 470 193.6 491.4 195.6C507 197.4 520 202 528.5 209.6L531 212C510 213 470 213.6 428.6 214.4L428 200C427.4 196 425 193.4 421 192Z" fill="#de412d"/><path d="M428.6 203.4L430 202.2C450 201.6 470 201.6 481 202.4L480.4 203.6C465 203.2 448 203.2 428.6 204.4Z" fill="#a81608" stroke="#a81608" stroke-width="0.5"/><path d="M398 287C397.4 270 402 254 413.4 243.1C424 234 440 229.6 473.6 228C490 227.6 505 230 516 233.6C524 236 529 238.4 531.3 239.9C536 246 538.4 256 537.8 262.6C537.4 269 536 272.6 534.5 274C532 278 529.6 280.2 526.4 280.5C522 280.4 518.6 278.6 516.6 275.6C514 268 508.6 263.4 502 261C496 258 489 256.8 482.5 256.9C474 257 468 257.8 463 259.4C456 262 450.6 265.4 446.8 269.1C442 275 438.6 280.6 435.4 285.4C432 290.6 429 293.4 425.6 295.1C421 298.4 417 300.2 412.6 300.8C406 301 402.4 299.4 401.3 296.8C399 294.4 398.2 291 398 287Z" fill="#de412d"/></g><path d="M414.3 265.9C415.6 258 418.4 253 422.4 249.6C425.6 246 429 243.8 433.8 242.3C444 239.4 456 238.4 466.3 238.3C478 238.2 489 238.8 498.8 239.9C504 240.8 509 242.2 513.4 243.9C504 242.4 494 241.4 480 241.2C462 241 446 242.4 436 245.4C427 248.6 419.4 256 414.3 265.9Z" fill="#a81608"/>
<g stroke="#2a1208" stroke-width="0.7" stroke-linejoin="round"><path d="M108.8 283.7C108.2 270 111.6 258 116.1 251.2C120.6 243 127.5 237.4 137 234.6C150 231.6 170 231.4 190 232.4C203 233 213.6 236.6 219.4 243.6C223.6 249 224.4 255 223.3 259.4C222.8 266 221.6 271 220 274C217.6 277.6 215 278.8 212 278C209 276.6 207 274 205.5 270.7C202.6 266 199.4 263.4 195.7 261.8C190 259.2 185 258 179.5 257.7C173 257.6 168 258.2 163.2 259.4C157 261.2 152 263.6 148.6 265.9C145.6 269 143.6 273 142.1 277.2C140.4 282 138.4 285.6 135.6 288.6C133 292.6 130.6 295 127.5 296.7C123.6 298 119.6 297.2 116.1 295.1C111.6 292.6 109.2 288.4 108.8 283.7Z" fill="#d42212"/><path d="M125.4 250C118.6 262 116.6 276 119.8 286C121.2 289.4 124.6 291 128 289.8C123.8 278 123 264 125.4 250Z" fill="#e8503a" stroke-width="0.5"/><path d="M218 256C216.4 262 214 268 210.8 273C216.6 272 220.2 265.6 218 256Z" fill="#e8503a" stroke-width="0.5"/></g>
<path d="M309.4 238.1H340.4M325 222.7V253.7" stroke="#f3d6d0" stroke-width="0.8" fill="none" opacity=".9"/>
</svg>
<!-- panel -->
<div class="a" style="left:1038.5px;top:55.2px;width:161.5px;height:621.8px;background:#f3f3f7"></div>
<div class="a" style="left:1038.5px;top:55.2px;width:161.5px;height:14.8px;background:#e6e6e9"></div>
<div class="a" style="left:1038.5px;top:68.4px;width:81.5px;height:1.5px;background:#9a9a9e"></div>
<div class="a" style="left:1120px;top:69.2px;width:80px;height:0.8px;background:#dcdce0"></div>
<div class="t" style="top:58.70px;font-size:7.8px;color:#555;left:1067.29px;"><span style="display:inline-block;transform:scaleX(0.897);transform-origin:50% 50%">Layers</span></div>
<div class="t" style="top:58.70px;font-size:7.8px;color:#555;left:1141.53px;"><span style="display:inline-block;transform:scaleX(0.944);transform-origin:50% 50%">Color Sync</span></div>
<div class="a" style="left:1038.5px;top:70.2px;width:161.5px;height:31.8px;background:#e6e6e9"></div>
<div class="a" style="left:1038.5px;top:101.6px;width:161.5px;height:1px;background:#d6d6da"></div>
<svg style="left:1049.5px;top:72px" width="14" height="14" viewBox="0 0 14 14"><g fill="none" stroke="#c4c6ca" stroke-width="0.9"><rect x="2" y="2.2" width="10" height="9"/><rect x="0.8" y="1" width="2.4" height="2.4" fill="#e6e6e9"/><rect x="10.8" y="1" width="2.4" height="2.4" fill="#e6e6e9"/><rect x="0.8" y="10" width="2.4" height="2.4" fill="#e6e6e9"/><rect x="10.8" y="10" width="2.4" height="2.4" fill="#e6e6e9"/><rect x="4.4" y="4.4" width="5.2" height="4.6"/></g></svg>
<div class="t" style="top:92.39px;font-size:5.8px;color:#c4c6ca;left:1048.54px;"><span style="display:inline-block;transform:scaleX(1.024);transform-origin:50% 50%">Group</span></div>
<svg style="left:1090px;top:71.5px" width="13" height="14" viewBox="0 0 13 14"><g fill="none" stroke="#50565b" stroke-width="0.85"><rect x="2" y="2" width="6" height="6"/><rect x="5.6" y="5.8" width="5.4" height="5.6"/><rect x="1" y="1" width="1.8" height="1.8" fill="#e6e6e9"/><rect x="7.2" y="1" width="1.8" height="1.8" fill="#e6e6e9"/><rect x="1" y="7" width="1.8" height="1.8" fill="#e6e6e9"/><rect x="10" y="4.8" width="1.8" height="1.8" fill="#e6e6e9"/><rect x="10" y="10.4" width="1.8" height="1.8" fill="#e6e6e9"/><rect x="4.6" y="10.4" width="1.8" height="1.8" fill="#e6e6e9"/></g></svg>
<div class="t" style="top:92.39px;font-size:5.8px;color:#444;left:1084.63px;"><span style="display:inline-block;transform:scaleX(1.020);transform-origin:50% 50%">UnGroup</span></div>
<svg style="left:1135px;top:72px" width="13" height="13" viewBox="0 0 13 13"><g fill="none" stroke="#50565b" stroke-width="0.85"><rect x="1" y="1" width="8" height="8" rx="1"/><rect x="3.6" y="3.6" width="8" height="8" rx="1"/><path d="M5 1v8M1 5h8M7.6 3.6v8M3.6 7.6h8"/></g></svg>
<div class="t" style="top:92.39px;font-size:5.8px;color:#444;left:1129.41px;"><span style="display:inline-block;transform:scaleX(1.075);transform-origin:50% 50%">Duplicate</span></div>
<svg style="left:1177.5px;top:72px" width="11" height="13" viewBox="0 0 11 13"><g fill="none" stroke="#9a9da2" stroke-width="0.85"><path d="M1.6 3.4h7.8v7.4a1.2 1.2 0 0 1-1.2 1.2H2.8a1.2 1.2 0 0 1-1.2-1.2Z"/><path d="M0.6 3.4h9.8M3.8 3.2V1.4h3.4v1.8"/><rect x="3.8" y="6" width="3.4" height="3.4"/></g></svg>
<div class="t" style="top:92.39px;font-size:5.8px;color:#444;left:1174.32px;"><span style="display:inline-block;transform:scaleX(1.044);transform-origin:50% 50%">Delete</span></div>
<div class="a" style="left:1038.5px;top:102.5px;width:152.5px;height:427.3px;background:#e4e4e7"></div>
<div class="a" style="left:1184.5px;top:102.5px;width:6.5px;height:427.3px;background:#eaeaed"></div>
<div class="a" style="left:1191px;top:102.5px;width:9px;height:514px;background:#f4f4f4"></div>
<svg style="left:1193.7px;top:107px" width="5" height="4" viewBox="0 0 5 4"><path d="M0.4 3.4L2.5 0.8L4.6 3.4Z" fill="#a8a8a8"/></svg>
<svg style="left:1193.7px;top:608.5px" width="5" height="4" viewBox="0 0 5 4"><path d="M0.4 0.6L2.5 3.2L4.6 0.6Z" fill="#6a6a6a"/></svg>
<svg style="left:1044.8px;top:110.5px" width="6" height="4" viewBox="0 0 6 4"><path d="M0.3 0.4H5.3L2.8 3.6Z" fill="#222"/></svg>
<div class="t" style="top:108.12px;font-size:8.6px;color:#444;left:1056.00px;"><span style="display:inline-block;transform:scaleX(1.027);transform-origin:0 50%">Pumkin_truck</span></div>
<svg style="left:1172px;top:109.5px" width="10" height="6.4" viewBox="0 0 10 6.4"><path d="M0.3 3.2C2.2 0.2 7.8 0.2 9.7 3.2C7.8 6.2 2.2 6.2 0.3 3.2Z" fill="#a9a9ab" stroke="#333" stroke-width="0.8"/><circle cx="5" cy="3.1" r="2.4" fill="#2a2a2a"/><circle cx="5.8" cy="2.3" r="0.8" fill="#e8e8e8"/></svg>
<!-- layers -->
<div class="a" style="left:1056px;top:120.8px;width:135px;height:1.2px;background:#d2d2d6"></div>
<svg style="left:1056px;top:127.0px" width="20" height="16" viewBox="0 0 20 16"><g fill="none" stroke="#b59f3c" stroke-width="1.8" stroke-linecap="round"><path d="M1.5 4.2C5 2.6 9 2 12.5 2.4C16.5 3 18 8 18.2 14"/><path d="M7 3.4C11 3 13.6 7 14.2 13.4"/><path d="M4.4 3.2L5.6 5"/></g></svg>
<div class="t" style="top:131.46px;font-size:8.2px;color:#444;left:1081.00px;"><span style="display:inline-block;transform:scaleX(0.901);transform-origin:0 50%">Basic Cut</span></div>
<svg style="left:1172px;top:132.0px" width="10" height="6.4" viewBox="0 0 10 6.4"><path d="M0.3 3.2C2.2 0.2 7.8 0.2 9.7 3.2C7.8 6.2 2.2 6.2 0.3 3.2Z" fill="#a9a9ab" stroke="#333" stroke-width="0.8"/><circle cx="5" cy="3.1" r="2.4" fill="#2a2a2a"/><circle cx="5.8" cy="2.3" r="0.8" fill="#e8e8e8"/></svg>
<div class="a" style="left:1056px;top:148.0px;width:135px;height:1.2px;background:#d2d2d6"></div>
<svg style="left:1056px;top:154.2px" width="20" height="16" viewBox="0 0 20 16"><g fill="none" stroke="#2c6e35" stroke-width="2.1" stroke-linecap="round"><path d="M2.2 14C3 8 7 3.4 14.6 2.2"/><path d="M6 14C6.4 9 9 4.6 14.8 2.6"/><path d="M10.2 13.6C10 9 11.6 5 15.4 3"/><path d="M14.6 2.2L16 5.4"/></g></svg>
<div class="t" style="top:158.67px;font-size:8.2px;color:#444;left:1081.00px;"><span style="display:inline-block;transform:scaleX(0.901);transform-origin:0 50%">Basic Cut</span></div>
<svg style="left:1172px;top:159.21px" width="10" height="6.4" viewBox="0 0 10 6.4"><path d="M0.3 3.2C2.2 0.2 7.8 0.2 9.7 3.2C7.8 6.2 2.2 6.2 0.3 3.2Z" fill="#a9a9ab" stroke="#333" stroke-width="0.8"/><circle cx="5" cy="3.1" r="2.4" fill="#2a2a2a"/><circle cx="5.8" cy="2.3" r="0.8" fill="#e8e8e8"/></svg>
<div class="a" style="left:1056px;top:175.2px;width:135px;height:1.2px;background:#d2d2d6"></div>
<svg style="left:1056px;top:181.4px" width="20" height="16" viewBox="0 0 20 16"><g fill="none" stroke="#d0835a" stroke-width="1.6" stroke-linecap="round"><path d="M1.4 11.6C2 7 6 4.6 10.4 4.8C15 5 18.4 7.4 18.6 11.6"/><path d="M4.8 11.6C5.2 8.4 7.2 6 9.6 5.2"/><path d="M8.6 11.6C8.8 8.8 9.8 6.8 11.6 5.4"/><path d="M15.4 11.6C15.2 8.8 14 6.6 11.8 5.4"/><path d="M12.2 11.6C12.4 9.4 12 7.6 11 6.2"/></g></svg>
<div class="t" style="top:185.88px;font-size:8.2px;color:#444;left:1081.00px;"><span style="display:inline-block;transform:scaleX(0.901);transform-origin:0 50%">Basic Cut</span></div>
<svg style="left:1172px;top:186.42000000000002px" width="10" height="6.4" viewBox="0 0 10 6.4"><path d="M0.3 3.2C2.2 0.2 7.8 0.2 9.7 3.2C7.8 6.2 2.2 6.2 0.3 3.2Z" fill="#a9a9ab" stroke="#333" stroke-width="0.8"/><circle cx="5" cy="3.1" r="2.4" fill="#2a2a2a"/><circle cx="5.8" cy="2.3" r="0.8" fill="#e8e8e8"/></svg>
<div class="a" style="left:1056px;top:202.4px;width:135px;height:1.2px;background:#d2d2d6"></div>
<svg style="left:1056px;top:208.6px" width="20" height="16" viewBox="0 0 20 16"><path d="M1.2 12.6C0.8 7 5 2.4 11 2.2C16.6 2 19.4 5 19.2 9C19 11.4 17 11.8 16 10C14.4 7.6 10 7.4 7.6 10C6.2 11.6 5.8 13.6 3.8 14.4C2.4 14.8 1.4 14 1.2 12.6Z" fill="#cf2a1b"/></svg>
<div class="t" style="top:213.09px;font-size:8.2px;color:#444;left:1081.00px;"><span style="display:inline-block;transform:scaleX(0.901);transform-origin:0 50%">Basic Cut</span></div>
<svg style="left:1172px;top:213.63px" width="10" height="6.4" viewBox="0 0 10 6.4"><path d="M0.3 3.2C2.2 0.2 7.8 0.2 9.7 3.2C7.8 6.2 2.2 6.2 0.3 3.2Z" fill="#a9a9ab" stroke="#333" stroke-width="0.8"/><circle cx="5" cy="3.1" r="2.4" fill="#2a2a2a"/><circle cx="5.8" cy="2.3" r="0.8" fill="#e8e8e8"/></svg>
<div class="a" style="left:1056px;top:229.6px;width:135px;height:1.2px;background:#d2d2d6"></div>
<svg style="left:1056px;top:235.8px" width="20" height="16" viewBox="0 0 20 16"><path d="M0.6 4.4H19.4V8.6H15.6V10H11.4V8.8H9.4C9 10.6 7 11 6.6 12.6H2.4V11H0.6Z" fill="#8f5e18"/></svg>
<div class="t" style="top:240.30px;font-size:8.2px;color:#444;left:1081.00px;"><span style="display:inline-block;transform:scaleX(0.901);transform-origin:0 50%">Basic Cut</span></div>
<svg style="left:1172px;top:240.84px" width="10" height="6.4" viewBox="0 0 10 6.4"><path d="M0.3 3.2C2.2 0.2 7.8 0.2 9.7 3.2C7.8 6.2 2.2 6.2 0.3 3.2Z" fill="#a9a9ab" stroke="#333" stroke-width="0.8"/><circle cx="5" cy="3.1" r="2.4" fill="#2a2a2a"/><circle cx="5.8" cy="2.3" r="0.8" fill="#e8e8e8"/></svg>
<div class="a" style="left:1056px;top:256.8px;width:135px;height:1.2px;background:#d2d2d6"></div>
<svg style="left:1056px;top:263.1px" width="20" height="16" viewBox="0 0 20 16"><path d="M1.4 14.2C1 11.6 1.6 9 3.2 8.4L4.8 8.6C4.6 6 5.8 3.8 7.6 3.4L8.4 1.8L10.2 2L10 3.4C12.2 3 13.8 4.2 14.4 5.8C16.4 5.2 18 6.2 18.4 7.6L19.6 7.8V11.8H14.6C13.4 13 9.4 13.2 7.8 12C6.2 12.8 4.2 13.4 3.4 15Z" fill="#ff8535"/></svg>
<div class="t" style="top:267.51px;font-size:8.2px;color:#444;left:1081.00px;"><span style="display:inline-block;transform:scaleX(0.901);transform-origin:0 50%">Basic Cut</span></div>
<svg style="left:1172px;top:268.05px" width="10" height="6.4" viewBox="0 0 10 6.4"><path d="M0.3 3.2C2.2 0.2 7.8 0.2 9.7 3.2C7.8 6.2 2.2 6.2 0.3 3.2Z" fill="#a9a9ab" stroke="#333" stroke-width="0.8"/><circle cx="5" cy="3.1" r="2.4" fill="#2a2a2a"/><circle cx="5.8" cy="2.3" r="0.8" fill="#e8e8e8"/></svg>
<div class="a" style="left:1056px;top:284.1px;width:135px;height:1.2px;background:#d2d2d6"></div>
<svg style="left:1056px;top:290.3px" width="20" height="16" viewBox="0 0 20 16"><path d="M1.6 14C1 11 1.4 8.4 3 7.6C5 7.4 6.6 6.6 7.4 4.6C9 2.6 13 2.2 15 3L15.4 2L16.6 2.2L16.6 3.6C18.6 4.4 19.4 7 19.2 11.6H13.6C11.6 12.8 8 12.8 6.8 11.8C5.2 12.4 3.8 13 3.4 14.6Z" fill="#e3c43c"/></svg>
<div class="t" style="top:294.72px;font-size:8.2px;color:#444;left:1081.00px;"><span style="display:inline-block;transform:scaleX(0.901);transform-origin:0 50%">Basic Cut</span></div>
<svg style="left:1172px;top:295.26px" width="10" height="6.4" viewBox="0 0 10 6.4"><path d="M0.3 3.2C2.2 0.2 7.8 0.2 9.7 3.2C7.8 6.2 2.2 6.2 0.3 3.2Z" fill="#a9a9ab" stroke="#333" stroke-width="0.8"/><circle cx="5" cy="3.1" r="2.4" fill="#2a2a2a"/><circle cx="5.8" cy="2.3" r="0.8" fill="#e8e8e8"/></svg>
<div class="a" style="left:1056px;top:311.3px;width:135px;height:1.2px;background:#d2d2d6"></div>
<svg style="left:1056px;top:317.5px" width="20" height="16" viewBox="0 0 20 16"><path d="M1.8 14.6C0.8 12 0.8 7.4 2.6 5C3.6 3.4 5 3 6 3.6L7 2.6L8.4 3.6L10 2.6L11.6 3.6L13.4 2.6L15 3.4C17.6 3 19.2 5.6 19.2 9.4C19.2 11.4 18.8 12.6 18.4 13H5C4.2 13.4 3.4 14.2 3 15Z" fill="#5b9a5b"/></svg>
<div class="t" style="top:321.93px;font-size:8.2px;color:#444;left:1081.00px;"><span style="display:inline-block;transform:scaleX(0.901);transform-origin:0 50%">Basic Cut</span></div>
<svg style="left:1172px;top:322.47px" width="10" height="6.4" viewBox="0 0 10 6.4"><path d="M0.3 3.2C2.2 0.2 7.8 0.2 9.7 3.2C7.8 6.2 2.2 6.2 0.3 3.2Z" fill="#a9a9ab" stroke="#333" stroke-width="0.8"/><circle cx="5" cy="3.1" r="2.4" fill="#2a2a2a"/><circle cx="5.8" cy="2.3" r="0.8" fill="#e8e8e8"/></svg>
<div class="a" style="left:1056px;top:338.5px;width:135px;height:1.2px;background:#d2d2d6"></div>
<svg style="left:1056px;top:344.7px" width="20" height="16" viewBox="0 0 20 16"><path d="M1.2 12.8C0.8 8 5 3.4 10.6 3C16 2.6 19.2 5.2 19.2 8.6C19.2 10.6 17.4 11 16.4 9.6C14.6 7.6 10.4 7.8 8 9.8C6.2 11.4 5.4 13.4 3.6 14.2C2.4 14.6 1.4 14 1.2 12.8Z" fill="#d8402d"/></svg>
<div class="t" style="top:349.14px;font-size:8.2px;color:#444;left:1081.00px;"><span style="display:inline-block;transform:scaleX(0.901);transform-origin:0 50%">Basic Cut</span></div>
<svg style="left:1172px;top:349.68px" width="10" height="6.4" viewBox="0 0 10 6.4"><path d="M0.3 3.2C2.2 0.2 7.8 0.2 9.7 3.2C7.8 6.2 2.2 6.2 0.3 3.2Z" fill="#a9a9ab" stroke="#333" stroke-width="0.8"/><circle cx="5" cy="3.1" r="2.4" fill="#2a2a2a"/><circle cx="5.8" cy="2.3" r="0.8" fill="#e8e8e8"/></svg>
<div class="a" style="left:1056px;top:365.7px;width:135px;height:1.2px;background:#d2d2d6"></div>
<svg style="left:1056px;top:371.9px" width="20" height="16" viewBox="0 0 20 16"><path d="M3.4 2H9.8V3.2H8.4V6H10V7.4H19V9.2L18 9.6L18.6 13.4H16.4L15.6 11.4H11.8V13.6H1.6V7.6H3V4.8H2.2V3.4H3.4Z" fill="#d6281a"/><path d="M4.4 3.4H7.2V6H4.4Z" fill="#e4e4e7"/></svg>
<div class="t" style="top:376.35px;font-size:8.2px;color:#444;left:1081.00px;"><span style="display:inline-block;transform:scaleX(0.901);transform-origin:0 50%">Basic Cut</span></div>
<svg style="left:1172px;top:376.89px" width="10" height="6.4" viewBox="0 0 10 6.4"><path d="M0.3 3.2C2.2 0.2 7.8 0.2 9.7 3.2C7.8 6.2 2.2 6.2 0.3 3.2Z" fill="#a9a9ab" stroke="#333" stroke-width="0.8"/><circle cx="5" cy="3.1" r="2.4" fill="#2a2a2a"/><circle cx="5.8" cy="2.3" r="0.8" fill="#e8e8e8"/></svg>
<div class="a" style="left:1056px;top:392.9px;width:135px;height:1.2px;background:#d2d2d6"></div>
<svg style="left:1056px;top:399.1px" width="20" height="16" viewBox="0 0 20 16"><path d="M1 6.2H6V4.4H8V6.2H9.2V3.6H13.4L14.6 6H18.4C19.4 6.4 19.6 8.4 19 9.8H16.4C16 8.4 13.6 8.4 13.2 9.8H7C6.6 8.4 4 8.4 3.6 9.8H1Z" fill="#dc3523"/><path d="M10.2 4.6H12.6V6H10.2ZM2.4 7.4H5.4V8.4H2.4Z" fill="#e4e4e7" opacity=".8"/></svg>
<div class="t" style="top:403.56px;font-size:8.2px;color:#444;left:1081.00px;"><span style="display:inline-block;transform:scaleX(0.901);transform-origin:0 50%">Basic Cut</span></div>
<svg style="left:1172px;top:404.1px" width="10" height="6.4" viewBox="0 0 10 6.4"><path d="M0.3 3.2C2.2 0.2 7.8 0.2 9.7 3.2C7.8 6.2 2.2 6.2 0.3 3.2Z" fill="#a9a9ab" stroke="#333" stroke-width="0.8"/><circle cx="5" cy="3.1" r="2.4" fill="#2a2a2a"/><circle cx="5.8" cy="2.3" r="0.8" fill="#e8e8e8"/></svg>
<div class="a" style="left:1056px;top:420.1px;width:135px;height:1.2px;background:#d2d2d6"></div>
<svg style="left:1056px;top:426.3px" width="20" height="16" viewBox="0 0 20 16"><circle cx="9" cy="8" r="7.4" fill="#cbc2bf" stroke="#9c9694" stroke-width="0.7"/><path d="M5 6.6C5.6 5.4 6.8 5.4 7.2 6.2M10.8 6.2C11.2 5.4 12.4 5.4 13 6.6" fill="none" stroke="#9c9694" stroke-width="0.6"/></svg>
<div class="t" style="top:430.77px;font-size:8.2px;color:#444;left:1081.00px;"><span style="display:inline-block;transform:scaleX(0.901);transform-origin:0 50%">Basic Cut</span></div>
<svg style="left:1172px;top:431.31px" width="10" height="6.4" viewBox="0 0 10 6.4"><path d="M0.3 3.2C2.2 0.2 7.8 0.2 9.7 3.2C7.8 6.2 2.2 6.2 0.3 3.2Z" fill="#a9a9ab" stroke="#333" stroke-width="0.8"/><circle cx="5" cy="3.1" r="2.4" fill="#2a2a2a"/><circle cx="5.8" cy="2.3" r="0.8" fill="#e8e8e8"/></svg>
<div class="a" style="left:1056px;top:447.3px;width:135px;height:1.2px;background:#d2d2d6"></div>
<svg style="left:1056px;top:453.5px" width="20" height="16" viewBox="0 0 20 16"><circle cx="9" cy="8" r="7.4" fill="#cbc2bf" stroke="#9c9694" stroke-width="0.7"/><path d="M5 6.6C5.6 5.4 6.8 5.4 7.2 6.2M10.8 6.2C11.2 5.4 12.4 5.4 13 6.6" fill="none" stroke="#9c9694" stroke-width="0.6"/></svg>
<div class="t" style="top:457.98px;font-size:8.2px;color:#444;left:1081.00px;"><span style="display:inline-block;transform:scaleX(0.901);transform-origin:0 50%">Basic Cut</span></div>
<svg style="left:1172px;top:458.52px" width="10" height="6.4" viewBox="0 0 10 6.4"><path d="M0.3 3.2C2.2 0.2 7.8 0.2 9.7 3.2C7.8 6.2 2.2 6.2 0.3 3.2Z" fill="#a9a9ab" stroke="#333" stroke-width="0.8"/><circle cx="5" cy="3.1" r="2.4" fill="#2a2a2a"/><circle cx="5.8" cy="2.3" r="0.8" fill="#e8e8e8"/></svg>
<div class="a" style="left:1056px;top:474.5px;width:135px;height:1.2px;background:#d2d2d6"></div>
<svg style="left:1056px;top:480.7px" width="20" height="16" viewBox="0 0 20 16"><path d="M0.8 6.6C0.8 5.4 1.6 5 2.6 5H8.4V3.6C8.4 3 9 2.6 9.6 2.6H13.4C14.2 2.6 14.6 3.2 14.8 4L15.2 5.4H17.6C19 5.6 19.6 7 19.4 8.8C19.4 9.6 19 10 18.4 10L17.6 10.2C17.4 12 14 12.2 13.6 10.2H8.2C7.8 12.2 4.2 12.2 3.8 10.2H1.8C1 10.2 0.8 9.6 0.8 9Z" fill="#0a0a0a"/></svg>
<div class="t" style="top:485.19px;font-size:8.2px;color:#444;left:1081.00px;"><span style="display:inline-block;transform:scaleX(0.901);transform-origin:0 50%">Basic Cut</span></div>
<svg style="left:1172px;top:485.73px" width="10" height="6.4" viewBox="0 0 10 6.4"><path d="M0.3 3.2C2.2 0.2 7.8 0.2 9.7 3.2C7.8 6.2 2.2 6.2 0.3 3.2Z" fill="#a9a9ab" stroke="#333" stroke-width="0.8"/><circle cx="5" cy="3.1" r="2.4" fill="#2a2a2a"/><circle cx="5.8" cy="2.3" r="0.8" fill="#e8e8e8"/></svg>
<div class="a" style="left:1056px;top:501.7px;width:135px;height:1.2px;background:#d2d2d6"></div>
<svg style="left:1056px;top:507.9px" width="20" height="16" viewBox="0 0 20 16"><path d="M0.8 6.6C0.8 5.4 1.6 5 2.6 5H8.4V3.6C8.4 3 9 2.6 9.6 2.6H13.4C14.2 2.6 14.6 3.2 14.8 4L15.2 5.4H17.6C19 5.6 19.6 7 19.4 8.8C19.4 9.6 19 10 18.4 10L17.6 10.2C17.4 12 14 12.2 13.6 10.2H8.2C7.8 12.2 4.2 12.2 3.8 10.2H1.8C1 10.2 0.8 9.6 0.8 9Z" fill="#cfc9c7"/></svg>
<div class="t" style="top:512.40px;font-size:8.2px;color:#444;left:1081.00px;"><span style="display:inline-block;transform:scaleX(0.901);transform-origin:0 50%">Basic Cut</span></div>
<svg style="left:1172px;top:512.94px" width="10" height="6.4" viewBox="0 0 10 6.4"><path d="M0.3 3.2C2.2 0.2 7.8 0.2 9.7 3.2C7.8 6.2 2.2 6.2 0.3 3.2Z" fill="#a9a9ab" stroke="#333" stroke-width="0.8"/><circle cx="5" cy="3.1" r="2.4" fill="#2a2a2a"/><circle cx="5.8" cy="2.3" r="0.8" fill="#e8e8e8"/></svg>
<!-- bottom -->
<div class="a" style="left:1038.5px;top:613.5px;width:161.5px;height:1px;background:#e4e4e8"></div>
<div class="a" style="left:1044.6px;top:619.3px;width:31.4px;height:20.8px;border:1.2px solid #a2a2a6;border-radius:2px;background:#fff"></div>
<div class="t" style="top:627.67px;font-size:7px;color:#444;left:1084.50px;">Blank Canvas</div>
<div class="a" style="left:1038.5px;top:646px;width:161.5px;height:31px;background:#e2e2e6"></div>
<svg style="left:1046.5px;top:648.5px" width="13" height="13" viewBox="0 0 13 13"><g fill="none" stroke="#c4c6ca" stroke-width="0.9"><rect x="1" y="1" width="6.6" height="6.6" rx="1"/><circle cx="8" cy="8" r="3.8"/></g></svg>
<div class="t" style="top:668.12px;font-size:6px;color:#c4c6ca;left:1046.20px;"><span style="display:inline-block;transform:scaleX(0.923);transform-origin:50% 50%">Slice</span></div>
<svg style="left:1075px;top:648.5px" width="13" height="13" viewBox="0 0 13 13"><path d="M1.2 1.2H7.4V4.6A3.9 3.9 0 1 1 4.6 7.6H1.2Z" fill="none" stroke="#50565b" stroke-width="0.9" stroke-linejoin="round"/></svg>
<div class="t" style="top:668.12px;font-size:6px;color:#444;left:1074.62px;"><span style="display:inline-block;transform:scaleX(0.959);transform-origin:50% 50%">Weld</span></div>
<svg style="left:1107px;top:648.5px" width="12" height="13" viewBox="0 0 12 13"><path d="M8.6 3.6L4 8.2A1.3 1.3 0 0 0 5.8 10L10 5.8A2.6 2.6 0 0 0 6.4 2.2L2 6.6A3.8 3.8 0 0 0 7.4 12" fill="none" stroke="#50565b" stroke-width="0.9"/></svg>
<div class="t" style="top:668.12px;font-size:6px;color:#444;left:1104.39px;">Attach</div>
<svg style="left:1140px;top:649px" width="14" height="12" viewBox="0 0 14 12"><g fill="none" stroke="#50565b" stroke-width="0.9"><path d="M7 1L13 4L7 7L1 4Z"/><path d="M1 7.4L7 10.4L13 7.4"/></g></svg>
<div class="t" style="top:668.12px;font-size:6px;color:#444;left:1137.73px;">Flatten</div>
<svg style="left:1176px;top:648.5px" width="13" height="13" viewBox="0 0 13 13"><g fill="none" stroke="#c4c6ca" stroke-width="0.9"><rect x="1" y="1" width="11" height="11"/><path d="M3.6 9.6V5.6L6 3.4H9.4V9.6Z"/></g></svg>
<div class="t" style="top:668.12px;font-size:6px;color:#c4c6ca;left:1172.03px;"><span style="display:inline-block;transform:scaleX(0.960);transform-origin:50% 50%">Contour</span></div>
<div class="a" style="left:1087.8px;top:587.6px;width:100.6px;height:77.2px;border-radius:50%;background:#c9391d"></div>
<div style="font-family:'Liberation Serif',serif;font-style:italic;font-weight:normal;-webkit-text-stroke:0.45px #fff;color:#fff;white-space:nowrap;position:absolute;line-height:0;left:1098.2px;top:613.6px;transform:scaleX(.98);transform-origin:0 50%;letter-spacing:-0.4px"><span style="font-size:33px">C</span><span style="font-size:22px">ra</span><span style="font-size:30px;position:relative;top:1px">f</span><span style="font-size:26px">t</span></div>
<div class="t" style="left:1157.6px;top:614.2px;font-size:7.2px;color:#fff;font-weight:bold;font-family:'Liberation Serif',serif"><span style="display:inline-block;transform:scaleX(1.03);transform-origin:0 50%">WITH</span></div>
<svg style="left:1156px;top:618px" width="26" height="8" viewBox="0 0 26 8"><path d="M2 3.6C6 2.4 10 5.4 14 5.8C18 6 21 4.8 23.4 2.6C21 5.6 17 7.4 13 6.8C9 6.2 6 4 2 3.6Z" fill="#fff" stroke="#fff" stroke-width="0.5" stroke-linejoin="round"/></svg>
<div style="font-family:'Liberation Serif',serif;font-style:italic;font-weight:normal;-webkit-text-stroke:0.45px #fff;color:#fff;white-space:nowrap;position:absolute;line-height:0;left:1106.4px;top:638.1px;transform:scaleX(1.10);transform-origin:0 50%;letter-spacing:-0.4px"><span style="font-size:33px">S</span><span style="font-size:22px">ara</span><span style="font-size:27px">h</span></div>
<svg style="left:0;top:0" width="1200" height="677" viewBox="0 0 1200 677"><g fill="none" stroke="#fff" stroke-width="0.9" stroke-linecap="round"><path d="M1108.5 603.6C1102.5 602.4 1098.2 606.6 1100 610.6C1101.6 613 1104.8 612 1104.6 609.2"/><path d="M1116.4 639.6C1110 637.6 1105.8 642.6 1107.6 648C1109.6 653.4 1116.6 653.2 1117.2 647.6C1117.4 644.6 1113.6 643.8 1112.6 646.4"/><path d="M1151 640C1156 632 1163.6 627.4 1170 628.2C1174.2 629 1174 632.6 1171.2 633"/><path d="M1153.4 636.6C1154 631.6 1150 627.6 1146.4 629.6C1143.6 631.6 1145.6 635.6 1148.6 634.2"/></g></svg>
<!-- overlay -->
<div class="t" style="top:122.70px;font-size:7.8px;color:#5a5a5a;left:320.00px;"><span style="display:inline-block;transform:scaleX(0.935);transform-origin:0 50%">10"</span></div>
<div class="t" style="top:232.40px;font-size:7.8px;color:#6a6a6a;left:567.50px;"><span style="display:inline-block;transform:scaleX(1.032);transform-origin:0 50%">4.392"</span></div>
<svg style="left:0;top:0" width="1200" height="677" viewBox="0 0 1200 677">
<rect x="99" y="138.9" width="451.4" height="199.3" fill="none" stroke="#959595" stroke-width="1.4"/>
<circle cx="89.5" cy="129.2" r="8.3" fill="#5a6268"/><circle cx="559.8" cy="129" r="8.3" fill="#5a6268"/><circle cx="89.5" cy="348" r="8.3" fill="#5a6268"/><circle cx="560" cy="348" r="8.3" fill="#5a6268"/><path d="M85.6 125.3L93.4 133.1M93.4 125.3L85.6 133.1" stroke="#e4e7e9" stroke-width="1.3" fill="none"/><path d="M563.2 131.2A3.9 3.9 0 1 1 562.4 126.2" stroke="#e4e7e9" stroke-width="1.3" fill="none"/><path d="M561 126.6L564.8 124.4L564.6 128.6Z" fill="#e4e7e9"/><path d="M87.2 347V345.2A2.3 2.3 0 0 1 91.8 345.2V347" stroke="#e4e7e9" stroke-width="1.1" fill="none"/><rect x="85.4" y="346.8" width="8.2" height="5.6" rx="1" fill="none" stroke="#e4e7e9" stroke-width="1.1"/><circle cx="89.5" cy="349.6" r="0.9" fill="#e4e7e9"/><path d="M556.6 344.6L563.4 351.4" stroke="#e4e7e9" stroke-width="1.2" fill="none"/><path d="M555.4 343.4H559.2L555.4 347.2ZM564.6 352.6H560.8L564.6 348.8Z" fill="#e4e7e9"/>
<path d="M405.4 83.4L438.4 92.6L432 100.6L707.8 353.2L699.9 361.2L424.4 108.6L417.6 115.2Z" fill="#d2391c" stroke="#1a0a04" stroke-width="1.3" stroke-linejoin="miter"/>
<path d="M401.4 209.6V229.8L405.8 225.8L409.2 232.6L412 231.2L408.8 224.6L415.6 224Z" fill="#0a0a0a" stroke="#fff" stroke-width="1" stroke-linejoin="round"/>
</svg>
</body></html>
